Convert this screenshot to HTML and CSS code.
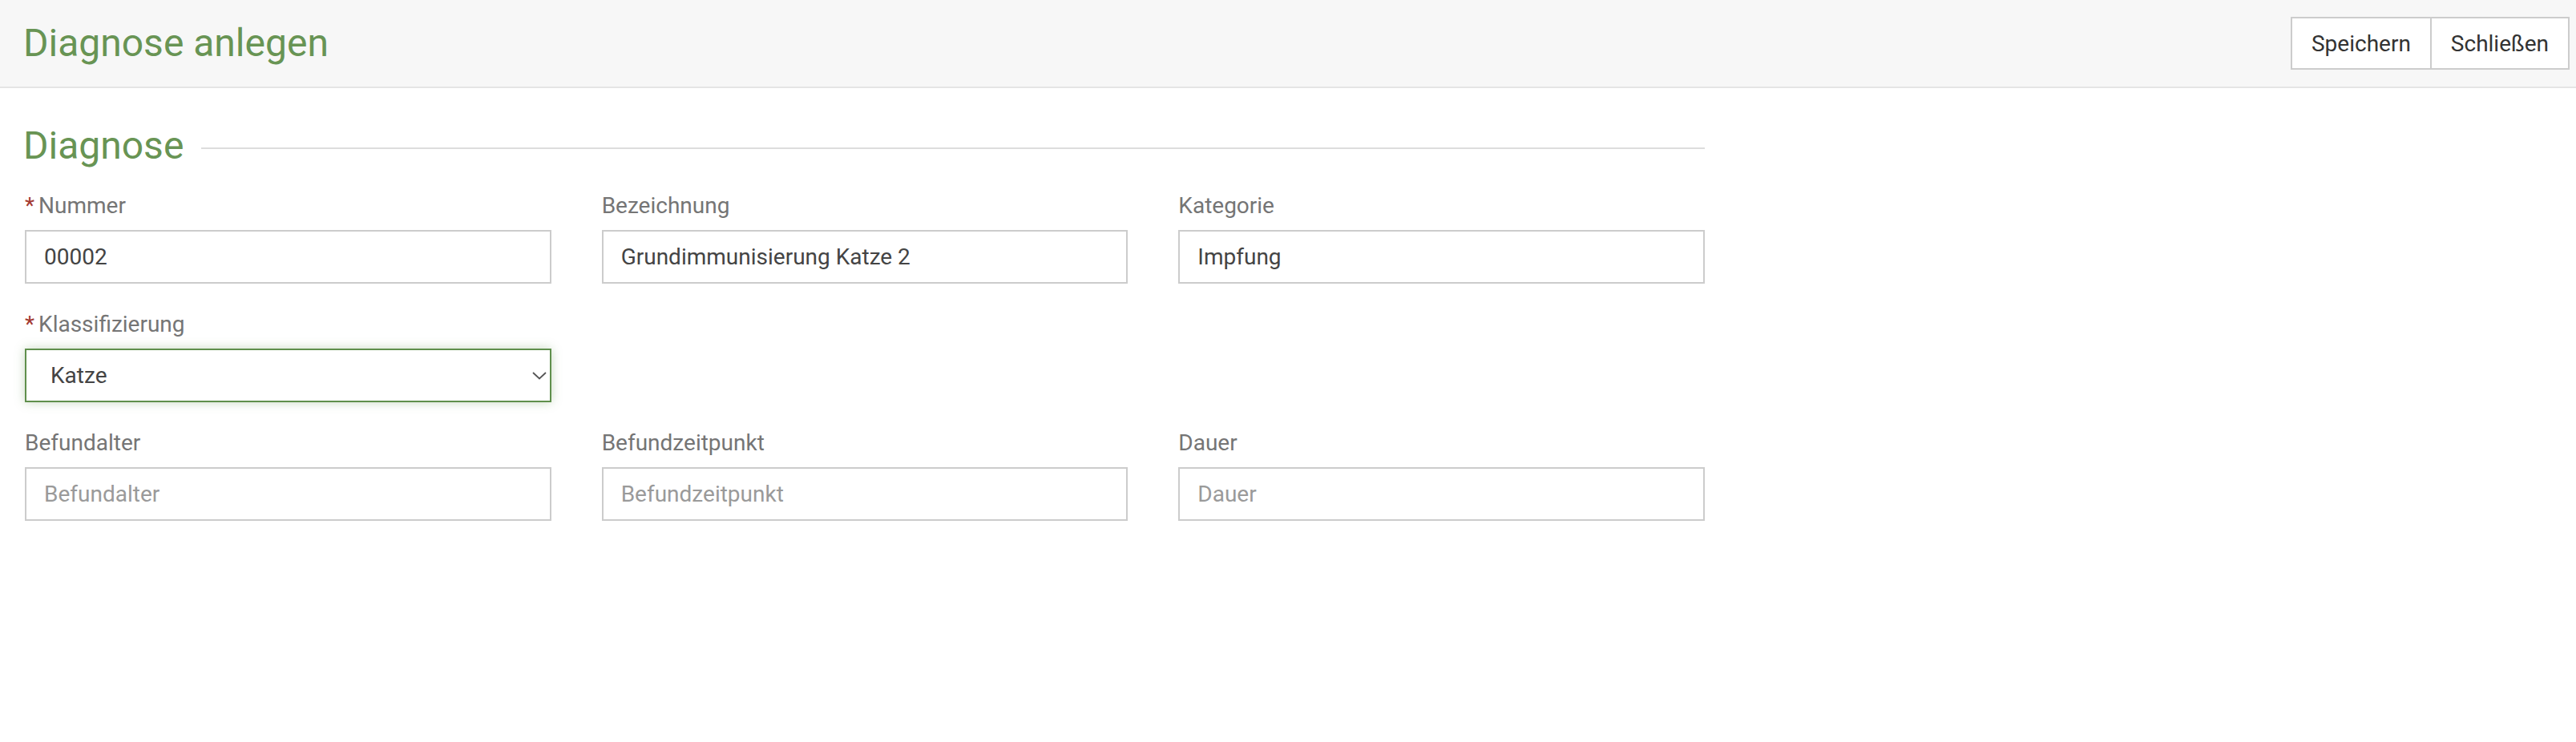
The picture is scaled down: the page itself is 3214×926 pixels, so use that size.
FILE: index.html
```html
<!DOCTYPE html>
<html lang="de">
<head>
<meta charset="utf-8">
<title>Diagnose anlegen</title>
<link rel="stylesheet" href="styles.css">
</head>
<body>
<header class="topbar">
  <h1 class="page-title">Diagnose anlegen</h1>
  <div class="btn-group">
    <button class="btn" type="button">Speichern</button>
    <button class="btn" type="button">Schließen</button>
  </div>
</header>
<main class="content">
  <section class="form-section">
    <div class="section-head">
      <h2 class="section-title">Diagnose</h2>
      <span class="section-rule"></span>
    </div>
    <div class="form-grid">
      <div class="field">
        <label class="label"><span class="req">*</span>Nummer</label>
        <input class="input" type="text" value="00002">
      </div>
      <div class="field">
        <label class="label">Bezeichnung</label>
        <input class="input" type="text" value="Grundimmunisierung Katze 2">
      </div>
      <div class="field">
        <label class="label">Kategorie</label>
        <input class="input" type="text" value="Impfung">
      </div>
      <div class="field field-first">
        <label class="label"><span class="req">*</span>Klassifizierung</label>
        <div class="select-wrap">
          <select class="select">
            <option>Katze</option>
            <option>Hund</option>
          </select>
          <svg class="chevron" width="18" height="10" viewBox="0 0 18 10" aria-hidden="true">
            <path d="M1 1 L9 8.5 L17 1" fill="none" stroke="#555" stroke-width="1.8"/>
          </svg>
        </div>
      </div>
      <div class="field field-first">
        <label class="label">Befundalter</label>
        <input class="input" type="text" placeholder="Befundalter">
      </div>
      <div class="field">
        <label class="label">Befundzeitpunkt</label>
        <input class="input" type="text" placeholder="Befundzeitpunkt">
      </div>
      <div class="field">
        <label class="label">Dauer</label>
        <input class="input" type="text" placeholder="Dauer">
      </div>
    </div>
  </section>
</main>
</body>
</html>
```

FILE: styles.css
```css
* {
  box-sizing: border-box;
}

html, body {
  margin: 0;
  padding: 0;
  background: #ffffff;
  font-family: Roboto, "Liberation Sans", Arial, sans-serif;
}

.topbar {
  height: 110px;
  background: #f7f7f7;
  border-bottom: 2px solid #e5e5e5;
  display: flex;
  align-items: center;
  justify-content: space-between;
  padding: 0 8px 0 29px;
}

.page-title {
  margin: 0;
  font-size: 48px;
  line-height: 56px;
  font-weight: 400;
  color: #689454;
}

.btn-group {
  display: flex;
}

.btn {
  height: 66px;
  padding: 0 24px;
  background: #ffffff;
  border: 2px solid #cccccc;
  font-family: Roboto, "Liberation Sans", Arial, sans-serif;
  font-size: 28px;
  color: #333333;
  cursor: pointer;
}

.btn + .btn {
  margin-left: -2px;
}

.content {
  padding: 44px 31px 0 31px;
}

.form-section {
  width: 2096px;
}

.section-head {
  display: flex;
  align-items: center;
  gap: 22px;
  margin-bottom: 26px;
}

.section-title {
  margin: 0;
  font-size: 48px;
  line-height: 56px;
  font-weight: 400;
  color: #689454;
  margin-left: -2px;
}

.section-rule {
  flex: 1;
  height: 2px;
  background: #dddddd;
  margin-top: 5px;
}

.form-grid {
  display: grid;
  grid-template-columns: repeat(3, 1fr);
  column-gap: 63px;
  row-gap: 30px;
}

.field-first {
  grid-column-start: 1;
}

.field {
  display: flex;
  flex-direction: column;
}

.label {
  font-size: 28px;
  line-height: 42px;
  color: #757575;
  margin-bottom: 9px;
}

.req {
  color: #a33a32;
  margin-right: 5px;
}

.input {
  height: 67px;
  width: 100%;
  border: 2px solid #cccccc;
  background: #ffffff;
  padding: 0 22px;
  font-family: Roboto, "Liberation Sans", Arial, sans-serif;
  font-size: 28px;
  color: #444444;
  outline: none;
}

.input::placeholder {
  color: #9a9a9a;
}

.select-wrap {
  position: relative;
}

.select {
  -webkit-appearance: none;
  appearance: none;
  display: block;
  width: 100%;
  height: 67px;
  border: 2px solid #5f8f4c;
  border-radius: 0;
  background: #ffffff;
  padding: 0 30px;
  font-family: Roboto, "Liberation Sans", Arial, sans-serif;
  font-size: 28px;
  color: #444444;
  box-shadow: 0 0 12px rgba(95, 143, 76, 0.35);
  outline: none;
}

.chevron {
  position: absolute;
  right: 6px;
  top: 29px;
  pointer-events: none;
}
```
